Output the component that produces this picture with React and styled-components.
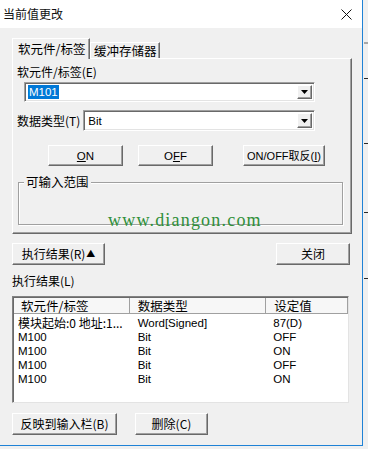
import React from "react";
import styled, { createGlobalStyle } from "styled-components";

const GlobalStyle = createGlobalStyle`
  html, body { margin: 0; padding: 0; background: #f0f0f0; }
  body {
    font-family: "Noto Sans CJK SC", "Liberation Sans", sans-serif;
    font-size: 12px;
    color: #000;
  }
  * { box-sizing: border-box; }
`;

const Screen = styled.div`
  width: 368px;
  height: 449px;
  background: #f0f0f0;
  display: flex;
  overflow: hidden;
`;

const Dialog = styled.div`
  width: 363px;
  height: 446px;
  background: #f0f0f0;
  border-right: 1px solid #1f82d6;
  border-bottom: 1px solid #1f82d6;
  display: flex;
  flex-direction: column;
  flex-shrink: 0;
`;

const TitleBar = styled.div`
  height: 28px;
  background: #fff;
  display: flex;
  align-items: center;
  justify-content: space-between;
  padding: 0 10px 0 3px;
`;

const Title = styled.span`
  font-size: 12px;
  line-height: 14px;
  margin-top: -1px;
  color: #111;
`;

const Body = styled.div`
  padding: 10px 0 0 12px;
  display: flex;
  flex-direction: column;
`;

const TabStrip = styled.div`
  height: 20px;
  display: flex;
  align-items: flex-end;
  position: relative;
  z-index: 1;
`;

const Tab = styled.div`
  height: ${(p) => (p.$active ? 21 : 16)}px;
  margin-bottom: ${(p) => (p.$active ? -1 : 0)}px;
  width: ${(p) => p.$width}px;
  background: #f0f0f0;
  border-top: 1px solid #fff;
  border-left: 1px solid #fff;
  border-right: 1px solid #696969;
  box-shadow: inset -1px 0 0 #a0a0a0;
  padding-left: ${(p) => (p.$active ? 5 : 3)}px;
  padding-top: ${(p) => (p.$active ? 2 : 0)}px;
  font-size: 12.5px;
  line-height: 15px;
  white-space: nowrap;
`;

const TabPanel = styled.div`
  position: relative;
  width: 340px;
  height: 176px;
  border-top: 1px solid #fff;
  border-left: 1px solid #fff;
  border-right: 1px solid #696969;
  border-bottom: 1px solid #696969;
  box-shadow: inset -1px -1px 0 #a0a0a0;
  display: flex;
  flex-direction: column;
  align-items: flex-start;
`;

const FieldLabel = styled.div`
  line-height: 14px;
  margin: ${(p) => p.$mt || 0}px 0 0 4px;
  white-space: nowrap;
`;

const Combo = styled.div`
  width: ${(p) => p.$width}px;
  height: ${(p) => p.$height || 20}px;
  margin-left: ${(p) => p.$ml || 0}px;
  margin-top: ${(p) => p.$mt || 0}px;
  background: #fff;
  border: 1px solid;
  border-color: #a0a0a0 #fff #fff #a0a0a0;
  box-shadow: inset 1px 1px 0 #696969, inset -1px -1px 0 #e3e3e3;
  display: flex;
  align-items: center;
  justify-content: space-between;
  padding: 2px;
`;

const ComboText = styled.span`
  font-family: "Liberation Sans", sans-serif;
  font-size: 11.5px;
  line-height: 14px;
  padding: 0 1px;
  margin-left: 1px;
  background: ${(p) => (p.$selected ? "#0078d7" : "transparent")};
  color: ${(p) => (p.$selected ? "#fff" : "#000")};
`;

const ComboArrow = styled.div`
  width: 15px;
  height: 100%;
  background: #f0f0f0;
  border: 1px solid;
  border-color: #fff #696969 #696969 #fff;
  box-shadow: inset -1px -1px 0 #a0a0a0;
  display: flex;
  align-items: center;
  justify-content: center;
`;

const FieldRow = styled.div`
  display: flex;
  align-items: center;
  margin-top: ${(p) => p.$mt || 0}px;
`;

const ButtonRow = styled.div`
  display: flex;
  margin-top: ${(p) => p.$mt || 0}px;
  margin-left: ${(p) => p.$ml || 0}px;
  width: ${(p) => (p.$width ? `${p.$width}px` : "auto")};
  justify-content: ${(p) => p.$justify || "flex-start"};
`;

const Button = styled.div`
  width: ${(p) => p.$width}px;
  height: ${(p) => p.$height || 21}px;
  margin-left: ${(p) => p.$ml || 0}px;
  background: #f0f0f0;
  border: 1px solid;
  border-color: #fff #696969 #696969 #fff;
  box-shadow: inset -1px -1px 0 #a0a0a0;
  display: flex;
  align-items: center;
  justify-content: center;
  line-height: 14px;
  white-space: nowrap;
  font-family: ${(p) =>
    p.$latin
      ? `"Liberation Sans", "Noto Sans CJK SC", sans-serif`
      : `"Noto Sans CJK SC", "Liberation Sans", sans-serif`};
  font-size: ${(p) => p.$size || 12}px;
`;

const U = styled.span`
  text-decoration: underline;
  text-underline-offset: 1px;
`;

const SmallTri = styled.span`
  font-size: 9px;
  margin-left: 1px;
`;

const GroupBox = styled.div`
  width: 325px;
  height: 43px;
  margin: 16px 0 0 5px;
  border: 1px solid #a0a0a0;
  box-shadow: 1px 1px 0 #fff, inset 1px 1px 0 #fff;
  position: relative;
`;

const Legend = styled.span`
  position: absolute;
  left: 5px;
  top: -8px;
  padding: 0 2px;
  background: #f0f0f0;
  line-height: 14px;
  font-size: 12.5px;
`;

const Watermark = styled.div`
  position: absolute;
  left: 95px;
  top: 152px;
  font-family: "Liberation Serif", "DejaVu Serif", serif;
  font-size: 18px;
  line-height: 18px;
  letter-spacing: 1.2px;
  color: #2f8f3a;
  white-space: nowrap;
`;

const PlainLabel = styled.div`
  line-height: 14px;
  margin-top: 9px;
`;

const ListView = styled.div`
  width: 337px;
  height: 107px;
  margin-top: 8px;
  background: #fff;
  border: 1px solid;
  border-color: #828282 #e3e3e3 #e3e3e3 #828282;
  box-shadow: inset 1px 1px 0 #696969;
  display: flex;
  flex-direction: column;
`;

const ListHeader = styled.div`
  display: flex;
  height: 16px;
  margin-left: 1px;
  margin-top: 1px;
  flex-shrink: 0;
`;

const HeaderCell = styled.div`
  width: ${(p) => p.$width}px;
  padding-left: ${(p) => p.$pl}px;
  background: #f7f7f7;
  border-right: 1px solid #a0a0a0;
  border-bottom: 1px solid #a0a0a0;
  line-height: 15px;
  font-size: 12.5px;
  white-space: nowrap;
`;

const Rows = styled.div`
  padding-top: 2px;
  margin-left: 1px;
  display: flex;
  flex-direction: column;
`;

const ListRow = styled.div`
  display: flex;
  height: 14px;
`;

const Cell = styled.div`
  width: ${(p) => p.$width}px;
  padding-left: ${(p) => p.$pl}px;
  line-height: 14px;
  white-space: nowrap;
  font-family: ${(p) =>
    p.$cjk
      ? `"Noto Sans CJK SC", "Liberation Sans", sans-serif`
      : `"Liberation Sans", sans-serif`};
  font-size: ${(p) => (p.$cjk ? 12 : 11.5)}px;
`;

const Strip = styled.div`
  flex: 1;
  display: flex;
  flex-direction: column;
`;

const StripLine = styled.div`
  height: ${(p) => p.$h || 1}px;
  margin-top: ${(p) => p.$mt}px;
  background: ${(p) => p.$color || "#333"};
  margin-left: 1px;
`;

const columns = [
  { w: 116, hp: 7, rp: 4 },
  { w: 137, hp: 8, rp: 8 },
  { w: 82, hp: 8, rp: 7 },
];

const rows = [
  ["模块起始:0 地址:1...", "Word[Signed]", "87(D)"],
  ["M100", "Bit", "OFF"],
  ["M100", "Bit", "ON"],
  ["M100", "Bit", "OFF"],
  ["M100", "Bit", "ON"],
];

const Arrow = () => (
  <svg width="7" height="4" viewBox="0 0 7 4">
    <polygon points="0,0 7,0 3.5,4" fill="#000" />
  </svg>
);

const CloseIcon = () => (
  <svg width="11" height="11" viewBox="0 0 11 11">
    <path d="M0.5 0.5 L10.5 10.5 M10.5 0.5 L0.5 10.5" stroke="#111" strokeWidth="1" />
  </svg>
);

export default function App() {
  return (
    <>
      <GlobalStyle />
      <Screen>
        <Dialog>
          <TitleBar>
            <Title>当前值更改</Title>
            <CloseIcon />
          </TitleBar>
          <Body>
            <TabStrip>
              <Tab $active $width={78}>软元件/标签</Tab>
              <Tab $width={70}>缓冲存储器</Tab>
            </TabStrip>
            <TabPanel>
              <FieldLabel $mt={6}>软元件/标签(E)</FieldLabel>
              <Combo $width={291} $ml={11} $mt={3}>
                <ComboText $selected>M101</ComboText>
                <ComboArrow><Arrow /></ComboArrow>
              </Combo>
              <FieldRow $mt={8}>
                <FieldLabel>数据类型(T)</FieldLabel>
                <Combo $width={232} $height={21} $ml={3}>
                  <ComboText>Bit</ComboText>
                  <ComboArrow><Arrow /></ComboArrow>
                </Combo>
              </FieldRow>
              <ButtonRow $mt={14} $ml={35}>
                <Button $width={75} $latin $size={11.5}><U>O</U>N</Button>
                <Button $width={75} $ml={15} $latin $size={11.5}>O<U>F</U>F</Button>
                <Button $width={82} $ml={30} $latin $size={11}>ON/OFF取反(<U>I</U>)</Button>
              </ButtonRow>
              <GroupBox>
                <Legend>可输入范围</Legend>
              </GroupBox>
              <Watermark>www.diangon.com</Watermark>
            </TabPanel>
            <ButtonRow $mt={9} $width={338} $justify="space-between">
              <Button $width={93} $height={22}>执行结果(R)<SmallTri>▲</SmallTri></Button>
              <Button $width={74} $height={22}>关闭</Button>
            </ButtonRow>
            <PlainLabel>执行结果(L)</PlainLabel>
            <ListView>
              <ListHeader>
                {["软元件/标签", "数据类型", "设定值"].map((h, i) => (
                  <HeaderCell key={h} $width={columns[i].w} $pl={columns[i].hp}>
                    {h}
                  </HeaderCell>
                ))}
              </ListHeader>
              <Rows>
                {rows.map((r, ri) => (
                  <ListRow key={ri}>
                    {r.map((c, ci) => (
                      <Cell key={ci} $width={columns[ci].w} $pl={columns[ci].rp} $cjk={ri === 0 && ci === 0}>
                        {c}
                      </Cell>
                    ))}
                  </ListRow>
                ))}
              </Rows>
            </ListView>
            <ButtonRow $mt={10}>
              <Button $width={105} $height={22}>反映到输入栏(B)</Button>
              <Button $width={73} $height={22} $ml={18}>删除(C)</Button>
            </ButtonRow>
          </Body>
        </Dialog>
        <Strip>
          <StripLine $mt={42} $h={2} $color="#a8a8a8" />
          <StripLine $mt={34} $color="#2a2a2a" />
          <StripLine $mt={64} $color="#2a2a2a" />
          <StripLine $mt={68} $color="#2a2a2a" />
          <StripLine $mt={65} $color="#2a2a2a" />
        </Strip>
      </Screen>
    </>
  );
}
